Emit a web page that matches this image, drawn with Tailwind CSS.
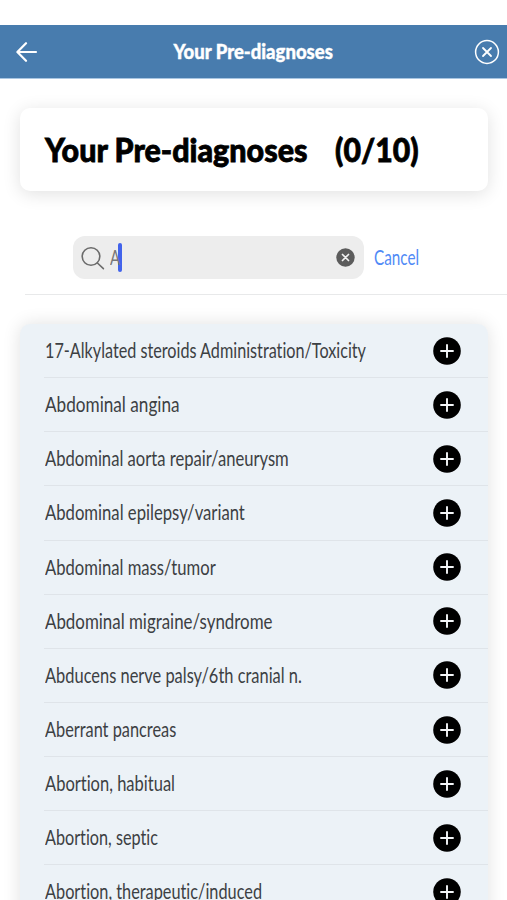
<!DOCTYPE html>
<html lang="en">
<head>
<meta charset="utf-8">
<title>Your Pre-diagnoses</title>
<script src="https://cdn.jsdelivr.net/npm/@tailwindcss/browser@4"></script>
</head>
<body class="bg-white w-[507px] h-[900px] overflow-hidden font-['Lato','Liberation_Sans',sans-serif] [font-variant-ligatures:none]">
<div class="h-[900px] overflow-hidden pt-[25px]">
  <header class="h-[54px] bg-[#487cae] border-b border-[#a9c6e2] flex items-center justify-between pl-4 pr-[7px]">
    <svg class="w-[22px] h-[22px]" viewBox="0 0 22 22" fill="none" stroke="#fff" stroke-width="2.2" stroke-linecap="round" stroke-linejoin="round"><path d="M20 11H1.5M10 2.2L1.4 11L10 19.8"/></svg>
    <h1 class="w-[160px] mr-[5px] flex justify-center whitespace-nowrap text-white text-[20px] leading-[26px] font-black pb-0.5 [-webkit-text-stroke:0.4px_#fff]"><span class="block scale-x-[0.925]">Your Pre-diagnoses</span></h1>
    <svg class="w-[26px] h-[26px]" viewBox="0 0 26 26" fill="none" stroke="#fff" stroke-width="1.5" stroke-linecap="round"><circle cx="13" cy="13" r="11.4"/><path d="M9 9l8 8M17 9l-8 8" stroke-width="1.8"/></svg>
  </header>
  <section class="mt-[29px] ml-5 w-[468px] h-[83px] rounded-[10px] bg-white shadow-[0_3px_18px_rgba(0,0,0,0.12)] flex items-center pl-[25px] pb-[2px] text-black text-[33px] leading-[40px] font-black whitespace-nowrap [-webkit-text-stroke:0.8px_#000]">
    <span class="block w-[290px]"><span class="inline-block origin-left scale-x-[0.923]">Your Pre-diagnoses</span></span>
    <span class="block"><span class="inline-block origin-left scale-x-[0.915]">(0/10)</span></span>
  </section>
  <div class="mt-[45px] ml-[73px] flex items-center">
    <div class="w-[291px] h-[43px] rounded-[12px] bg-[#ededed] flex items-center pl-2 pr-[9px]">
      <svg class="w-6 h-6" viewBox="0 0 24 24" fill="none" stroke="#6b6b6b" stroke-width="1.6" stroke-linecap="round"><circle cx="10" cy="10.5" r="8.8"/><path d="M16.4 17l6 5.6"/></svg>
      <span class="ml-[5px] w-[8px] pb-[1px] text-[20.5px] leading-6 text-[#777]"><span class="inline-block origin-left scale-x-[0.73]">A</span></span>
      <span class="w-[4px] h-[29px] rounded-sm bg-[#4263eb]"></span>
      <svg class="ml-auto w-[19px] h-[19px]" viewBox="0 0 19 19"><circle cx="9.5" cy="9.5" r="9.2" fill="#5c5c5c"/><path d="M6.5 6.5l6 6M12.5 6.5l-6 6" stroke="#f2f2f2" stroke-width="1.7" stroke-linecap="round"/></svg>
    </div>
    <span class="ml-[10px] pb-[1px] text-[20.5px] leading-6 text-[#508af6]"><span class="inline-block origin-left scale-x-[0.746]">Cancel</span></span>
  </div>
  <div class="mt-[15px] ml-[25px] h-px bg-[#e8e9ea]"></div>
  <ul id="list" class="mt-[29px] ml-5 w-[468px] h-[620px] rounded-t-[10px] bg-[#ecf2f7] shadow-[0_0_18px_rgba(0,0,0,0.12)] pl-6 text-[20.5px] leading-6 text-[#3c4043] whitespace-nowrap"></ul>
</div>
<script>
// label, horizontal condensing factor
const rows = [
  ["17-Alkylated steroids Administration/Toxicity", 0.79],
  ["Abdominal angina", 0.837],
  ["Abdominal aorta repair/aneurysm", 0.81],
  ["Abdominal epilepsy/variant", 0.813],
  ["Abdominal mass/tumor", 0.811],
  ["Abdominal migraine/syndrome", 0.824],
  ["Abducens nerve palsy/6th cranial n.", 0.801],
  ["Aberrant pancreas", 0.796],
  ["Abortion, habitual", 0.805],
  ["Abortion, septic", 0.791],
  ["Abortion, therapeutic/induced", 0.795]
];
const list = document.getElementById("list");
for (const [name, scale] of rows) {
  const li = document.createElement("li");
  li.className = "h-[54.15px] border-b border-[#dfe4e9] flex items-center justify-between pl-px pr-[27.5px]";
  li.innerHTML = `<span class="block origin-left pb-[1px]" style="transform:scaleX(${scale})">${name}</span>
    <svg class="w-7 h-7 -ml-12 shrink-0" viewBox="0 0 28 28"><circle cx="14" cy="14" r="13.8" fill="#000"/><path d="M14 8v12M8 14h12" stroke="#f4f6f8" stroke-width="1.9" stroke-linecap="round"/></svg>`;
  list.appendChild(li);
}
</script>
</body>
</html>
